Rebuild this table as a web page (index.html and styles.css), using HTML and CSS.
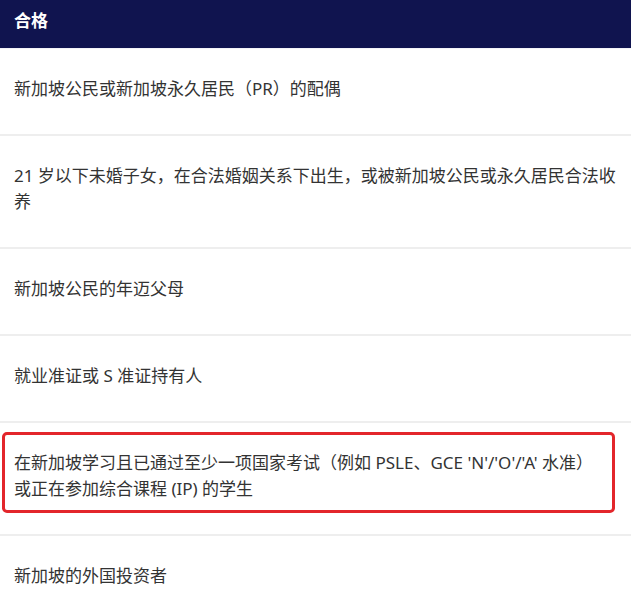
FILE: index.html
```html
<!DOCTYPE html>
<html lang="zh-CN">
<head>
<meta charset="utf-8">
<title>合格</title>
<link rel="stylesheet" href="styles.css">
</head>
<body>
<div class="table">
  <div class="head">合格</div>
  <div class="row">新加坡公民或新加坡永久居民（PR）的配偶</div>
  <div class="row">21 岁以下未婚子女，在合法婚姻关系下出生，或被新加坡公民或永久居民合法收<br>养</div>
  <div class="row">新加坡公民的年迈父母</div>
  <div class="row">就业准证或 S 准证持有人</div>
  <div class="row row-marked">在新加坡学习且已通过至少一项国家考试（例如 PSLE、GCE 'N'/'O'/'A' 水准）<br>或正在参加综合课程 (IP) 的学生</div>
  <div class="row">新加坡的外国投资者</div>
</div>
</body>
</html>
```
FILE: styles.css
```css
html, body {
  margin: 0;
  padding: 0;
  background: #ffffff;
}

body {
  font-family: "Noto Sans", "Noto Sans CJK SC", sans-serif;
  font-size: 17px;
  color: #333333;
}

.table {
  display: flex;
  flex-direction: column;
}

.head {
  background: #10144f;
  color: #ffffff;
  font-weight: 700;
  font-size: 17px;
  line-height: 26px;
  height: 49px;
  box-sizing: border-box;
  padding: 8px 14px 0;
  border-bottom: 1px solid #f3f3f8;
}

.row {
  position: relative;
  line-height: 26px;
  padding: 27px 4px 32px 14px;
  border-bottom: 2px solid #eeeeee;
  white-space: nowrap;
}

.row-marked::after {
  content: "";
  position: absolute;
  top: 9px;
  left: 2px;
  right: 16px;
  bottom: 21px;
  border: 3px solid #e3262b;
  border-radius: 5px;
  pointer-events: none;
}
```
